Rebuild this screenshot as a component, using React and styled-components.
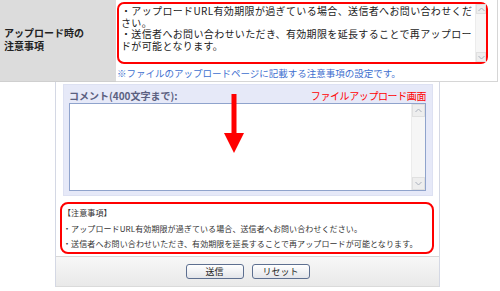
import React from 'react'
import styled, { createGlobalStyle } from 'styled-components'

const GlobalStyle = createGlobalStyle`
  html, body {
    margin: 0;
    padding: 0;
    background: #fff;
  }
  body {
    width: 500px;
    height: 291px;
    overflow: hidden;
    font-family: "Noto Sans CJK JP", "Noto Sans", sans-serif;
  }
`

const Page = styled.div`
  width: 500px;
  height: 291px;
`

const SettingRow = styled.div`
  display: flex;
  height: 82px;
`

const LabelCell = styled.div`
  width: 116px;
  flex-shrink: 0;
  box-sizing: border-box;
  display: flex;
  align-items: center;
  padding: 0 0 2px 4px;
  background: #dcdcdc;
  border-bottom: 1px solid #cfcfcf;
  font-size: 10px;
  font-weight: bold;
  line-height: 12.5px;
  color: #222;
`

const ValueCell = styled.div`
  flex: 1;
  margin-right: 2px;
  padding: 2px 9px 0 1px;
  border-right: 1px solid #d6d6d6;
  border-bottom: 1px solid #d6d6d6;
`

const RedFrame = styled.div`
  box-sizing: border-box;
  display: flex;
  height: ${(p) => p.$h}px;
  border: 2px solid #ff0000;
  border-radius: ${(p) => p.$r}px;
  background: #fff;
`

const FrameText = styled.div`
  flex: 1;
  min-width: 0;
  padding: 1px 0 0 2px;
  font-size: 10px;
  letter-spacing: 0.35px;
  line-height: 11.5px;
  white-space: nowrap;
  overflow: hidden;
  color: #222;
`

const Scrollbar = styled.div`
  width: ${(p) => p.$w}px;
  flex-shrink: 0;
  display: flex;
  flex-direction: column;
  justify-content: space-between;
  background: #f6f6f6;
  border-left: 1px solid #ececec;
`

const ScrollArrow = styled.div`
  height: ${(p) => p.$w}px;
  display: flex;
  align-items: center;
  justify-content: center;
  background: #eeeeee;
  border: 1px solid #e0e0e0;
  box-sizing: border-box;
`

const Hint = styled.div`
  margin-top: 3px;
  font-size: 9.5px;
  line-height: 12px;
  color: #3e6fcf;
`

const OuterBox = styled.div`
  box-sizing: border-box;
  width: 385px;
  height: 205px;
  margin-left: 55px;
  padding: 2px 5px 0 4px;
  border-left: 1px solid #d4d8e4;
  border-right: 1px solid #d4d8e4;
  display: flex;
  flex-direction: column;
`

const Panel = styled.div`
  position: relative;
  margin: 0 1px 0 3px;
  padding: 1px 6px 4px 5px;
  background: #e6e9f8;
  border: 1px solid #dde1f2;
`

const PanelHead = styled.div`
  display: flex;
  justify-content: space-between;
  align-items: flex-end;
  height: 17px;
`

const CommentLabel = styled.span`
  font-size: 10px;
  font-weight: bold;
  color: #5b6080;
  line-height: 14px;
`

const ScreenName = styled.span`
  font-size: 10px;
  color: #ff0000;
  line-height: 14px;
  letter-spacing: -0.4px;
`

const CommentBox = styled.div`
  display: flex;
  height: 88px;
  box-sizing: border-box;
  border: 1px solid #8fa3cc;
  background: #fff;
`

const CommentInput = styled.div`
  flex: 1;
`

const Arrow = styled.svg`
  position: absolute;
  left: 160px;
  top: 9px;
`

const Notes = styled(RedFrame)`
  display: block;
  margin: 6px 0 0 0;
  padding: 1px 2px 0 1px;
  font-size: 8px;
  letter-spacing: 0.1px;
  line-height: 15.5px;
  white-space: nowrap;
  color: #333;
`

const ButtonBar = styled.div`
  display: flex;
  justify-content: center;
  align-items: center;
  gap: 8px;
  height: 31px;
  margin: 2px -5px 0 -4px;
  border-top: 1px solid #d8d8d8;
  border-bottom: 1px solid #dadada;
  background: linear-gradient(#f7f7f7, #e9e9e9);
`

const Button = styled.button`
  width: 58px;
  height: 15px;
  padding: 0;
  border: 1px solid #5d6f90;
  border-radius: 3px;
  background: linear-gradient(#ffffff, #e3e5ea);
  font-family: inherit;
  font-size: 9px;
  line-height: 13px;
  color: #222;
`

const Chevron = ({ up }) => (
  <svg width="7" height="5" viewBox="0 0 7 5">
    <polyline
      points={up ? '0.5,4 3.5,1 6.5,4' : '0.5,1 3.5,4 6.5,1'}
      fill="none"
      stroke="#aab0bc"
      strokeWidth="1"
    />
  </svg>
)

const Scroll = ({ w }) => (
  <Scrollbar $w={w}>
    <ScrollArrow $w={w}><Chevron up /></ScrollArrow>
    <ScrollArrow $w={w}><Chevron /></ScrollArrow>
  </Scrollbar>
)

export default function App() {
  return (
    <Page>
      <GlobalStyle />
      <SettingRow>
        <LabelCell>
          アップロード時の<br />注意事項
        </LabelCell>
        <ValueCell>
          <RedFrame $h={62} $r={7}>
            <FrameText>
              <div>・アップロードURL有効期限が過ぎている場合、送信者へお問い合わせくだ</div>
              <div>さい。</div>
              <div>・送信者へお問い合わせいただき、有効期限を延長することで再アップロー</div>
              <div>ドが可能となります。</div>
            </FrameText>
            <Scroll w={10} />
          </RedFrame>
          <Hint>※ファイルのアップロードページに記載する注意事項の設定です。</Hint>
        </ValueCell>
      </SettingRow>

      <OuterBox>
        <Panel>
          <PanelHead>
            <CommentLabel>コメント(400文字まで):</CommentLabel>
            <ScreenName>ファイルアップロード画面</ScreenName>
          </PanelHead>
          <CommentBox>
            <CommentInput />
            <Scroll w={13} />
          </CommentBox>
          <Arrow width="20" height="59" viewBox="0 0 20 59">
            <rect x="7.5" y="0" width="5" height="40" fill="#ff0000" />
            <polygon points="0,39 20,39 10,59" fill="#ff0000" />
          </Arrow>
        </Panel>

        <Notes $h={52} $r={8}>
          <div>【注意事項】</div>
          <div>・アップロードURL有効期限が過ぎている場合、送信者へお問い合わせください。</div>
          <div>・送信者へお問い合わせいただき、有効期限を延長することで再アップロードが可能となります。</div>
        </Notes>

        <ButtonBar>
          <Button>送信</Button>
          <Button>リセット</Button>
        </ButtonBar>
      </OuterBox>
    </Page>
  )
}
